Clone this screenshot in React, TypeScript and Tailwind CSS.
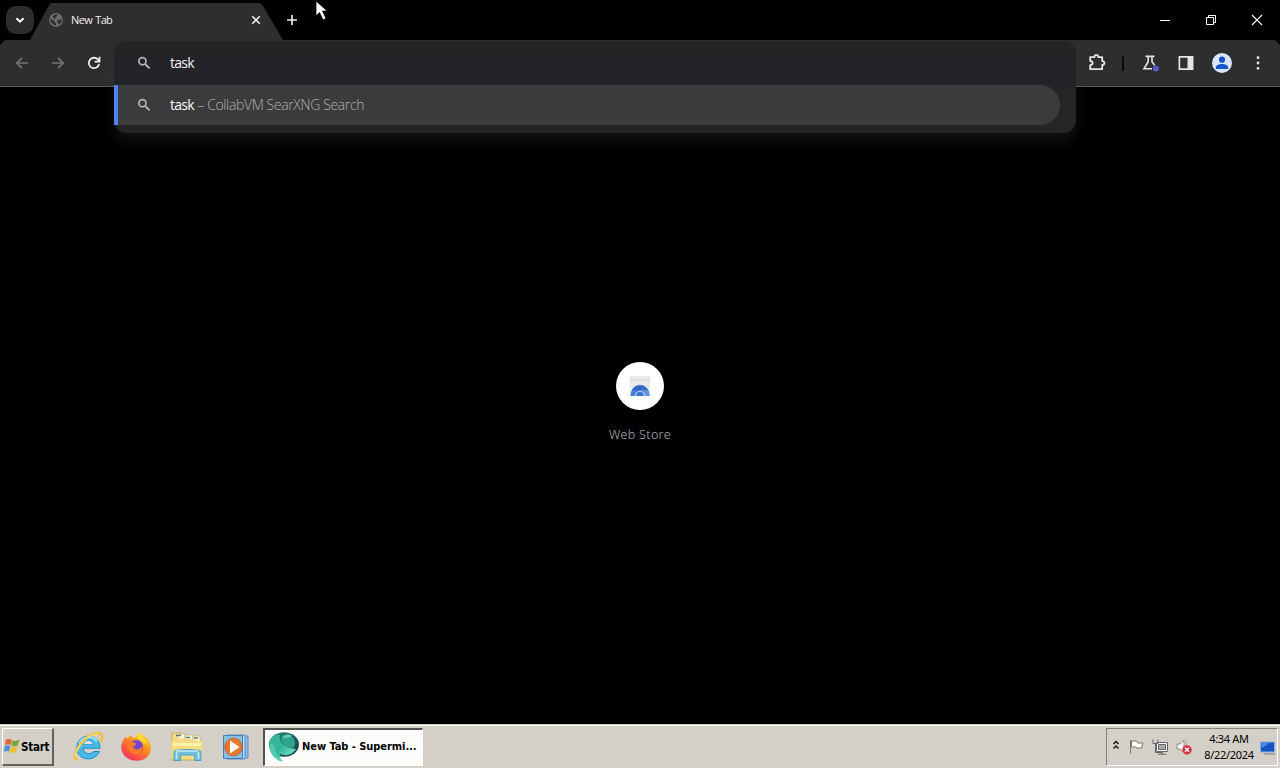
import React from "react";

const ui = "font-['Open_Sans','Noto_Sans',sans-serif]";
const classic = "font-['DejaVu_Sans_Condensed','DejaVu_Sans',sans-serif]";

function SearchIcon() {
  return (
    <svg className="h-4 w-4 shrink-0" viewBox="0 0 16 16" fill="none" stroke="#b4b4b4">
      <circle cx="6.4" cy="6.2" r="3.6" strokeWidth="1.7" />
      <path d="M9 9l4.6 4.4" strokeWidth="1.9" />
    </svg>
  );
}

function TabStrip() {
  return (
    <div className="flex h-10 shrink-0 items-start text-[#f0f0f0]">
      <div className="ml-1.5 mt-1.5 flex h-7 w-7 items-center justify-center rounded-[10px] bg-[#2c2c2c]">
        <svg className="h-3 w-3" viewBox="0 0 12 12" fill="none" stroke="#fff" strokeWidth="1.9"><path d="M2.4 4.2L6 7.7l3.6-3.5" /></svg>
      </div>
      <div className="-ml-1 mt-[3px] flex h-[37px] w-[253px] items-center bg-[#2e2e2e] pb-[3px] pl-[18px] [clip-path:polygon(0_100%,18px_4px,21px_0,230px_0,233px_3px,100%_100%)]">
        <svg className="h-4 w-4 shrink-0" viewBox="0 0 16 16">
          <circle cx="8" cy="8" r="6.9" fill="#6b6b6b" />
          <path d="M2.4 6.1l2.2 2.1 2 .4v1.7l1.4 1.2v1.9C4.5 13.2 2.2 10 2.4 6.1zM6 3.1l3-.8.3 1.5-1.7 1.2v1.4H5.5L4.9 4.5zM9 8h2.4l2.2-1.2c.2 2.7-.7 4.4-2.3 5.7L9.6 10.8z" fill="#303030" />
        </svg>
        <span className={`ml-[7px] w-[177px] whitespace-nowrap text-[11px] leading-4 tracking-[-0.65px] [word-spacing:1px] ${ui}`}>New Tab</span>
        <svg className="h-4 w-4 shrink-0" viewBox="0 0 16 16" stroke="#e8e8e8" strokeWidth="1.6"><path d="M4.2 4.2l7.6 7.6M11.8 4.2l-7.6 7.6" /></svg>
      </div>
      <svg className="ml-[1px] mt-3 h-4 w-4" viewBox="0 0 16 16" stroke="#eee" strokeWidth="1.7"><path d="M8 3v10M3 8h10" /></svg>
      <div className="ml-auto mr-4 mt-[13px] flex gap-8">
        <svg className="h-[14px] w-[14px]" viewBox="0 0 14 14" stroke="#fff"><path d="M2 7.5h10" /></svg>
        <svg className="h-[14px] w-[14px]" viewBox="0 0 14 14" fill="none" stroke="#fff"><path d="M2.5 4.5h7v7h-7zM4.5 4.5v-2h7v7h-2" /></svg>
        <svg className="h-[14px] w-[14px]" viewBox="0 0 14 14" stroke="#fff" strokeWidth="1.1"><path d="M2 2l10 10M12 2L2 12" /></svg>
      </div>
    </div>
  );
}

function Toolbar() {
  return (
    <div className="flex h-[47px] shrink-0 items-center border-b border-[#5a5a5a] bg-[#2e2e2e] [clip-path:polygon(0_5px,5px_0,1275px_0,100%_5px,100%_100%,0_100%)]">
      <div className="ml-[14px] flex gap-5">
        <svg className="h-4 w-4" viewBox="0 0 16 16" fill="none" stroke="#777" strokeWidth="1.7"><path d="M13.8 8H3M8 2.8L2.8 8 8 13.2" /></svg>
        <svg className="h-4 w-4" viewBox="0 0 16 16" fill="none" stroke="#777" strokeWidth="1.7"><path d="M2.2 8H13M8 2.8L13.2 8 8 13.2" /></svg>
        <svg className="h-4 w-4" viewBox="0 0 16 16" fill="none" stroke="#eee" strokeWidth="1.8"><path d="M13.1 9a5.2 5.2 0 1 1-1.3-4.6L13.3 6M13.5 1.8v4.9H8.6" /></svg>
      </div>
      <div className="ml-auto flex items-center">
        <svg className="h-5 w-5" viewBox="0 0 20 20" fill="none" stroke="#e4e4e4" strokeWidth="1.8" strokeLinejoin="round">
          <path d="M3.2 4.1h4.3c0-3 3.7-3 3.7 0h4v4c3 .1 3 3.8 0 3.9v4.2H3.2v-4c3.3-.5 3.3-3.8 0-4.2z" />
        </svg>
        <div className="ml-[15px] h-[15px] w-0.5 bg-[#0b0b0b]" />
        <svg className="ml-[17px] h-5 w-5" viewBox="0 0 20 20" fill="none">
          <path d="M4.5 3.4h9M7.2 4v4.7L3 15.8h8M11 4v4.7l2.6 3.6" stroke="#e5e5e5" strokeWidth="1.6" />
          <circle cx="14.8" cy="15.5" r="3" fill="#555bc4" />
        </svg>
        <svg className="ml-[15px] h-5 w-5" viewBox="0 0 20 20">
          <path d="M3.4 3.9h13v12.3h-13z" fill="none" stroke="#e5e5e5" strokeWidth="1.7" />
          <path d="M11.5 3h5.8v14h-5.8z" fill="#e5e5e5" />
        </svg>
        <svg className="ml-4 h-5 w-5" viewBox="0 0 20 20">
          <circle cx="10" cy="10" r="10" fill="#d9e6fb" />
          <circle cx="10" cy="6.7" r="3.1" fill="#1454c6" />
          <path d="M3.8 14.7c0-5 12.4-5 12.4 0v1.2H3.8z" fill="#1454c6" />
        </svg>
        <svg className="ml-[18px] mr-[14px] h-4 w-4" viewBox="0 0 16 16" fill="#e8e8e8">
          <circle cx="8" cy="2.7" r="1.4" /><circle cx="8" cy="8" r="1.4" /><circle cx="8" cy="13.3" r="1.4" />
        </svg>
      </div>
    </div>
  );
}

function Omnibox() {
  return (
    <div className={`absolute left-[114px] top-[41px] h-[92px] w-[962px] rounded-[13px] bg-[#252527] text-[14px] leading-5 shadow-[0_8px_14px_rgba(65,65,65,0.28)] ${ui}`}>
      <div className="flex h-11 items-center rounded-t-[13px] bg-gradient-to-b from-[#252526] to-[#22222a] pl-[22px]">
        <SearchIcon />
        <span className="ml-[18px] tracking-[-0.7px] text-[#f5f5f5]">task</span>
      </div>
      <div className="flex h-10 w-[946px] items-center rounded-r-full rounded-l-[2px] border-l-4 border-[#4d82f0] bg-[#3b3b3b] pl-[18px]">
        <SearchIcon />
        <span className="ml-[18px] whitespace-pre font-light tracking-[-0.37px] text-[#b0b0b0]"><span className="font-normal tracking-[-0.7px] text-[#fafafa]">task</span> – CollabVM SearXNG Search</span>
      </div>
    </div>
  );
}

function WebStore() {
  return (
    <div className="flex flex-col items-center pt-[275px]">
      <div className="flex h-12 w-12 items-center justify-center rounded-full bg-white">
        <svg className="h-5 w-5" viewBox="0 0 20 20">
          <path d="M0 0h20v20H0z" fill="#e9eaec" />
          <path d="M0 3h20v2H0z" fill="#dfe1e4" />
          <path d="M.4 20a9.6 11 0 0 1 19.2 0z" fill="#487fda" />
          <path d="M10 9a9.6 11 0 0 1 9.6 11h-5.2A4.4 4.6 0 0 0 10 14.6z" fill="#6594df" />
          <path d="M1.8 14.2a9.6 9.6 0 0 1 16.4 0L10 14z" fill="#3568c4" />
          <path d="M5 20a5 5.3 0 0 1 10 0z" fill="#bcd2f5" />
          <path d="M6.3 20a3.7 4.2 0 0 1 7.4 0z" fill="#3975d4" />
        </svg>
      </div>
      <span className="mt-[17px] whitespace-nowrap font-['Noto_Sans',sans-serif] text-[12.5px] font-light leading-4 tracking-[0.35px] text-[#b4b4b4]">Web Store</span>
    </div>
  );
}

function IEIcon() {
  return (
    <svg className="h-8 w-8" viewBox="0 0 32 32" fill="none">
      <path d="M28 17.2H11.2c.4 6.2 8 7.1 10.2 3.3h6C23.4 31.5 4.8 30.2 4.8 16.8 4.8 1.7 28 .5 28 17.2z" fill="#48b9e9" stroke="#168bc5" />
      <path d="M11.3 13.4c.7-5.3 9.3-5.3 9.8 0z" fill="#e2e6e6" stroke="#168bc5" strokeWidth=".7" />
      <path d="M7.3 12.5C10 5.2 21 3.5 24.8 10.5" stroke="#9fe6ff" strokeWidth="2" />
      <path d="M5.5 29C-3.7 28 11 4 24.7 2.2c6.2-.8 6.4 5.1 3.7 9.2" stroke="#efc23a" strokeWidth="2.6" />
      <path d="M3.2 25C5 15 16.2 3.5 25.7 2.8" stroke="#ffe780" strokeWidth="1" />
    </svg>
  );
}

function FirefoxIcon() {
  return (
    <svg className="h-8 w-8" viewBox="0 0 32 32">
      <defs><linearGradient id="fox" x1=".85" y1="0" x2=".2" y2="1"><stop stopColor="#ffe733" /><stop offset=".45" stopColor="#ff8a20" /><stop offset="1" stopColor="#f32660" /></linearGradient></defs>
      <path d="M5 6l3 1.6 2.5-4.1c1 2.8 2.8 3.2 4.6 3.6C16.3 4.7 18 2.3 20 1c1 4.4 8.8 4.3 10.8 13.4C33.5 35 1.5 34.2 1.3 16.2 1.2 11.6 3.2 9.2 5 6z" fill="url(#fox)" />
      <circle cx="16.3" cy="15.8" r="6.7" fill="#7545d1" />
      <path d="M8.5 11.4l5.8-.1c3.4 1.2 1.3 3.3-1.3 4.2 1.2 5 7.8 2.8 8.2-.6 3.5 5.4-3.1 9.7-7.9 7.8-4.3-1.7-6.6-5.3-4.8-11.3z" fill="#ff792b" />
      <path d="M20 1c1 5 7.3 6.8 7 14.1-2-5-6.7-4.7-10.2-8.1C17.4 4.4 18.7 2.3 20 1z" fill="#ffda32" />
    </svg>
  );
}

function ExplorerIcon() {
  return (
    <svg className="h-8 w-9" viewBox="0 0 36 32">
      <path d="M3 7V2h9v3h7v2h12v22H3z" fill="#f6dc88" stroke="#c9ab5b" />
      <path d="M8 7V3h8v4m0 1V4h8v4m0 0V5h7v6" fill="#fff8dd" stroke="#d1bc83" />
      <path d="M7 4.5h5M17 6.5h4M25 7h4" stroke="#527e76" strokeWidth="1.7" />
      <path d="M2.5 10h31v18h-31z" fill="#f3dc82" /><path d="M4 12h28v3H4z" fill="#fff0a8" />
      <path d="M5 20.5c0-2.5 27-2.5 27 0v9h-6.5V24H11.5v5.5H5z" fill="#72bedd" stroke="#45a2ca" />
      <path d="M7 20h22M7.5 21v7M29.5 21v7" stroke="#c3e9f5" strokeWidth="1.5" />
    </svg>
  );
}

function PlayerIcon() {
  return (
    <svg className="h-8 w-8" viewBox="0 0 32 32">
      <path d="M10 5h18v22H10z" fill="#91bce6" stroke="#578fc6" />
      <path d="M7 4h18v24H7z" fill="#c3dcf2" stroke="#548dc7" />
      <path d="M3.5 4.5h19v23h-19z" fill="#8bbce2" stroke="#427eb9" />
      <circle cx="13.5" cy="16" r="8.8" fill="#e8792c" stroke="#b66332" strokeWidth=".8" />
      <path d="M10 9.5l9.5 6.5-9.5 6.5z" fill="#fff" />
    </svg>
  );
}

function SwirlIcon() {
  return (
    <svg className="h-8 w-8 shrink-0" viewBox="0 0 32 32">
      <defs>
        <linearGradient id="swirl" x2=".9" y2="1"><stop stopColor="#2f9c84" /><stop offset=".45" stopColor="#1d6661" /><stop offset="1" stopColor="#123f49" /></linearGradient>
        <linearGradient id="ribbon" x2=".9" y2=".8"><stop stopColor="#3bb695" /><stop offset=".55" stopColor="#35b699" /><stop offset="1" stopColor="#7be2c8" /></linearGradient>
      </defs>
      <ellipse cx="17" cy="13.5" rx="15" ry="12.2" fill="url(#swirl)" />
      <path d="M3 9C6 4 10 3 13 4c-2 8 6 13 16 14-4 6-10 7.5-16 5-1 3 0 5 4 7.5C8 30 0 20 3 9z" fill="url(#ribbon)" />
      <path d="M14 8c3-5 10-4 13 0 2 4 1 7-1 9-6 0-11-3-12-9z" fill="#2ea58b" />
      <path d="M15 6c3-3 7-3 10-1-3 2-6 2.5-10 1z" fill="#5fcdb2" />
      <path d="M2.5 13C2 22 7 28 14 30.5 10 25 8 20 8 15c-2-2-4-2.5-5.5-2z" fill="#58cfb0" opacity=".8" />
    </svg>
  );
}

function Tray() {
  return (
    <div className="mr-0.5 flex h-[38px] w-[172px] items-center border border-b-white border-l-[#85827b] border-r-white border-t-[#85827b] pl-[5px]">
      <svg className="-mt-1 h-3 w-2 shrink-0" viewBox="0 0 8 12" fill="none" stroke="#111" strokeWidth="1.4"><path d="M1.5 5L4 2.5 6.5 5M1.5 9.5L4 7l2.5 2.5" /></svg>
      <svg className="ml-2 h-4 w-4 shrink-0" viewBox="0 0 16 16" fill="#fff" stroke="#777"><path d="M2.5 1v14M3.5 2h5l1.5 2h5l-1.5 5H9L7.5 8h-4z" /></svg>
      <svg className="ml-2 h-4 w-4 shrink-0" viewBox="0 0 16 16" fill="#fff" stroke="#666"><path d="M4.5 3.5h11v9h-11z" /><path d="M6.5 5.5h7v5h-7z" fill="#aaa" /><path d="M1 .5v4h5v-4M3.5 4.5v9h7M10 13v2M6 15.2h8" fill="none" /></svg>
      <svg className="ml-2 h-4 w-4 shrink-0" viewBox="0 0 16 16"><path d="M1 5h3l4-4v13l-4-4H1z" fill="#f8f8f8" stroke="#888" /><path d="M10 2c1 1 1 3 0 4" stroke="#aaa" fill="none" /><circle cx="11" cy="10.8" r="4.6" fill="#df2937" stroke="#c77983" strokeWidth=".7" /><path d="M9 8.8l4 4m0-4l-4 4" stroke="#fff" strokeWidth="1.5" /></svg>
      <div className="ml-2 w-[58px] shrink-0 text-center font-['Noto_Sans','Liberation_Sans',sans-serif] text-[11px] leading-4 tracking-[-0.32px] text-black">
        <div>4:34 AM</div><div>8/22/2024</div>
      </div>
      <svg className="ml-0.5 h-4 w-[15px] shrink-0" viewBox="0 0 15 16"><path d="M.5 3h14v10H.5z" fill="#1454c2" stroke="#8fb2dc" /><path d="M1 3.5h9L2 9z" fill="#4b8be6" /><path d="M4 15h11" stroke="#777" /></svg>
    </div>
  );
}

function Taskbar() {
  return (
    <div className={`flex h-11 shrink-0 items-center border-t border-[#d4d0c8] bg-[#d4d0c8] shadow-[inset_0_1px_0_#fff] ${classic}`}>
      <div className="ml-0.5 flex h-[38px] w-[52px] items-center border border-b-2 border-r-2 border-b-[#65625d] border-l-white border-r-[#65625d] border-t-white">
        <svg className="ml-px h-[18px] w-4 shrink-0" viewBox="0 0 16 18">
          <path d="M1.7 3c2-1.7 4-1 6-.2L6.6 8C4.5 6.9 3 7 1 8z" fill="#e36435" />
          <path d="M8.3 3.3c2 1 4.4.9 7.2-.7l-1.6 5.9c-2.3 1.1-4.6.8-6.7 0z" fill="#79a936" />
          <path d="M.8 9c2-1.2 3.9-.7 5.5 0L5 14.5c-1.8-1-3.3-.7-5 .3z" fill="#4b91d6" />
          <path d="M6.9 9.4c2 .9 4.2.8 6.6 0L12 15.3c-2 .9-4.3.6-6.4-.2z" fill="#f0bd35" />
        </svg>
        <span className="ml-px pt-[3px] text-[11.5px] font-bold tracking-[-0.25px] text-black">Start</span>
      </div>
      <div className="ml-[18px] flex items-center gap-4"><IEIcon /><FirefoxIcon /></div>
      <div className="ml-[17px] flex items-center gap-[15px]"><ExplorerIcon /><PlayerIcon /></div>
      <div className="ml-[11px] flex h-[38px] w-[160px] items-center border-b border-l-2 border-r border-t-2 border-b-white border-l-[#55534f] border-r-white border-t-[#55534f] bg-[#fcfcfa] pl-0.5">
        <SwirlIcon />
        <span className="ml-[3px] whitespace-nowrap pt-px text-[11px] font-bold tracking-[-0.05px] text-black">New Tab - Supermi...</span>
      </div>
      <div className="ml-auto"><Tray /></div>
    </div>
  );
}

export default function App() {
  return (
    <div className="relative flex h-[768px] w-[1280px] flex-col overflow-hidden bg-black">
      <TabStrip />
      <Toolbar />
      <main className="min-h-0 flex-1"><WebStore /></main>
      <Taskbar />
      <Omnibox />
      <svg className="absolute left-[315px] top-0 h-[22px] w-4" viewBox="0 0 16 22"><path d="M1 1v15l3.5-3.5L8 20l3-1.4L7.6 11h4.7z" fill="#fff" stroke="#000" strokeWidth=".8" /></svg>
    </div>
  );
}
